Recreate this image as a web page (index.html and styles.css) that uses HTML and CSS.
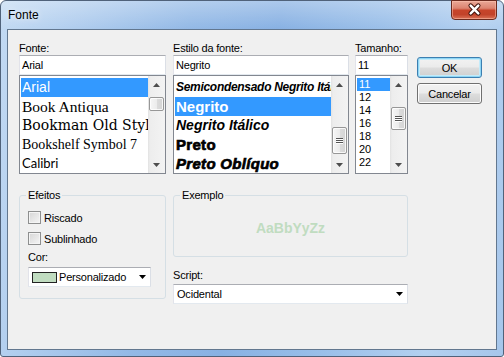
FILE: index.html
```html
<!DOCTYPE html>
<html lang="pt-BR">
<head>
    <meta charset="UTF-8">
    <title>Fonte</title>
    <link rel="stylesheet" href="styles.css">
</head>
<body>
    <div class="window">
        <div class="titlebar">
            <span class="title">Fonte</span>
            <button class="close-btn" aria-label="Fechar">
                <svg width="46" height="19" viewBox="0 0 46 19">
                    <path d="M19.5 5.5 L27.5 13.5 M27.5 5.5 L19.5 13.5" stroke="#3e1109" stroke-width="4.6" stroke-linecap="round" fill="none"/>
                    <path d="M19.5 5.5 L27.5 13.5 M27.5 5.5 L19.5 13.5" stroke="#fff" stroke-width="2.6" stroke-linecap="round" fill="none"/>
                </svg>
            </button>
        </div>
        <div class="frame">
            <div class="client">
                <div class="top-grid">
                    <!-- Fonte -->
                    <div class="col">
                        <label class="label">Fonte:</label>
                        <div class="textbox w-font">Arial</div>
                        <div class="listbox w-font">
                            <ul class="items">
                                <li class="selected f-arial">Arial</li>
                                <li class="f-book">Book Antiqua</li>
                                <li class="f-bookman">Bookman Old Style</li>
                                <li class="f-bookshelf">Bookshelf Symbol 7</li>
                                <li class="f-calibri">Calibri</li>
                            </ul>
                            <div class="scrollbar">
                                <span class="sb-btn"><svg width="7" height="4"><polygon points="0,4 7,4 3.5,0" fill="#4d4d4d"/></svg></span>
                                <div class="sb-track"><span class="thumb thumb-font"></span></div>
                                <span class="sb-btn"><svg width="7" height="4"><polygon points="0,0 7,0 3.5,4" fill="#4d4d4d"/></svg></span>
                            </div>
                        </div>
                    </div>

                    <!-- Estilo da fonte -->
                    <div class="col">
                        <label class="label">Estilo da fonte:</label>
                        <div class="textbox w-style">Negrito</div>
                        <div class="listbox w-style">
                            <ul class="items">
                                <li class="s-semi">Semicondensado Negrito Itálico</li>
                                <li class="selected s-negrito">Negrito</li>
                                <li class="s-negrito-it">Negrito Itálico</li>
                                <li class="s-preto">Preto</li>
                                <li class="s-preto-obl">Preto Oblíquo</li>
                            </ul>
                            <div class="scrollbar">
                                <span class="sb-btn"><svg width="7" height="4"><polygon points="0,4 7,4 3.5,0" fill="#4d4d4d"/></svg></span>
                                <div class="sb-track"><span class="thumb thumb-style grip"></span></div>
                                <span class="sb-btn"><svg width="7" height="4"><polygon points="0,0 7,0 3.5,4" fill="#4d4d4d"/></svg></span>
                            </div>
                        </div>
                    </div>

                    <!-- Tamanho -->
                    <div class="col">
                        <label class="label">Tamanho:</label>
                        <div class="textbox w-size">11</div>
                        <div class="listbox w-size">
                            <ul class="items sizes">
                                <li class="selected">11</li>
                                <li>12</li>
                                <li>14</li>
                                <li>16</li>
                                <li>18</li>
                                <li>20</li>
                                <li>22</li>
                            </ul>
                            <div class="scrollbar">
                                <span class="sb-btn"><svg width="7" height="4"><polygon points="0,4 7,4 3.5,0" fill="#4d4d4d"/></svg></span>
                                <div class="sb-track"><span class="thumb thumb-size grip"></span></div>
                                <span class="sb-btn"><svg width="7" height="4"><polygon points="0,0 7,0 3.5,4" fill="#4d4d4d"/></svg></span>
                            </div>
                        </div>
                    </div>

                    <!-- botões -->
                    <div class="col buttons">
                        <button class="btn btn-default">OK</button>
                        <button class="btn">Cancelar</button>
                    </div>
                </div>

                <div class="bottom-grid">
                    <fieldset class="group effects">
                        <legend>Efeitos</legend>
                        <div class="check"><span class="checkbox"></span>Riscado</div>
                        <div class="check second"><span class="checkbox"></span>Sublinhado</div>
                        <label class="label cor-label">Cor:</label>
                        <div class="combo color-combo">
                            <span class="swatch"></span>
                            <span class="combo-text">Personalizado</span>
                            <svg width="7" height="4"><polygon points="0,0 7,0 3.5,4" fill="#000"/></svg>
                        </div>
                    </fieldset>

                    <div class="col">
                        <fieldset class="group sample">
                            <legend>Exemplo</legend>
                            <div class="sample-text">AaBbYyZz</div>
                        </fieldset>
                        <label class="label script-label">Script:</label>
                        <div class="combo script-combo">
                            <span class="combo-text">Ocidental</span>
                            <svg width="7" height="4"><polygon points="0,0 7,0 3.5,4" fill="#000"/></svg>
                        </div>
                    </div>
                </div>
            </div>
        </div>
    </div>
</body>
</html>
```

FILE: styles.css
```css
* {
    box-sizing: border-box;
    margin: 0;
    padding: 0;
}

body {
    background-color: #fff;
    font-family: 'Liberation Sans', Arial, sans-serif;
    font-size: 11px;
    letter-spacing: -0.2px;
    color: #000;
}

/* janela estilo Aero */
.window {
    width: 504px;
    height: 357px;
    display: flex;
    flex-direction: column;
    border: 1px solid #50627a;
    border-radius: 6px 6px 3px 3px;
    background:
        linear-gradient(to bottom, rgba(255,255,255,0.3), rgba(255,255,255,0) 28px),
        linear-gradient(100deg, #c3daf3 0%, #b0cdee 14%, #93b9e6 34%, #88b1e3 50%, #9abfe9 68%, #b3d0f0 86%, #a6c6eb 100%);
}

.titlebar {
    height: 28px;
    display: flex;
    justify-content: space-between;
    align-items: flex-start;
    padding: 0 6px 0 7px;
}

.title {
    margin-top: 7px;
    font-size: 12px;
    line-height: 14px;
    letter-spacing: 0;
    text-shadow: 0 0 6px rgba(255,255,255,0.9);
}

.close-btn {
    width: 46px;
    height: 20px;
    margin-top: -1px;
    border: 1px solid #6a2a1e;
    border-radius: 0 0 4px 4px;
    background: linear-gradient(to bottom, #eaa897 0%, #dc8470 40%, #c7442a 52%, #c2432a 75%, #da7257 100%);
    box-shadow: inset 0 0 0 1px rgba(255,200,180,0.5);
    display: flex;
    align-items: center;
    justify-content: center;
}

.close-btn svg {
    display: block;
    margin-top: -1px;
}

.frame {
    flex: 1;
    display: flex;
    padding: 0 6px 6px;
}

.client {
    flex: 1;
    border: 1px solid #62778f;
    background-color: #f0f0f0;
    padding: 12px 0 0 11px;
}

/* parte de cima */
.top-grid {
    display: grid;
    grid-template-columns: 154px 182px 62px 65px;
}

.col {
    display: flex;
    flex-direction: column;
}

.label {
    display: block;
    height: 13px;
    line-height: 13px;
}

.w-font { width: 147px; }
.w-style { width: 176px; }
.w-size { width: 53px; }

.textbox {
    height: 20px;
    line-height: 18px;
    padding: 0 2px;
    background-color: #fff;
    border: 1px solid;
    border-color: #abadb3 #dbdfe6 #e3e9ef #e2e3ea;
}

.listbox {
    height: 99px;
    display: flex;
    background-color: #fff;
    border: 1px solid #828790;
    overflow: hidden;
}

.items {
    flex: 1;
    list-style: none;
    padding: 2px 0 0 1px;
    overflow: hidden;
    letter-spacing: 0;
}

.items li {
    height: 19px;
    line-height: 19px;
    padding-left: 1px;
    white-space: nowrap;
    overflow: hidden;
}

.items li.selected {
    background-color: #3399ff;
    color: #fff;
}

.f-arial { font-size: 14px; }
.f-book { font-family: 'Liberation Serif', serif; font-size: 15.5px; }
.f-bookman { font-family: 'DejaVu Serif', serif; font-size: 14px; }
.f-bookshelf { font-family: 'Liberation Serif', serif; font-size: 14px; }
.f-calibri { font-family: Lato, sans-serif; font-size: 13px; }

.s-semi {
    font-size: 12px;
    font-weight: bold;
    font-style: italic;
    letter-spacing: -0.3px;
}

.s-negrito {
    font-size: 15px;
    font-weight: bold;
}

.s-negrito-it {
    font-size: 14px;
    font-weight: bold;
    font-style: italic;
}

.s-preto,
.s-preto-obl {
    font-size: 15px;
    font-weight: bold;
    -webkit-text-stroke: 0.7px #000;
    letter-spacing: 0.3px;
}

.s-preto-obl {
    font-style: italic;
}

.items.sizes li {
    height: 13px;
    line-height: 13px;
    font-size: 11px;
    padding-left: 2px;
    width: 34px;
}

/* barra de rolagem */
.scrollbar {
    width: 17px;
    display: flex;
    flex-direction: column;
    background: linear-gradient(to right, #e2e2e2 0, #ededed 2px, #f3f3f3 100%);
}

.sb-btn {
    height: 17px;
    display: flex;
    align-items: center;
    justify-content: center;
}

.sb-btn svg {
    display: block;
}

.sb-track {
    flex: 1;
    padding: 0 1px;
}

.thumb {
    display: flex;
    align-items: center;
    justify-content: center;
    width: 15px;
    border: 1px solid #979797;
    border-radius: 2px;
    background: linear-gradient(to right, #f6f6f6 0%, #ececec 50%, #dcdcdc 51%, #d4d4d4 100%);
    box-shadow: inset 0 0 0 1px rgba(255,255,255,0.8);
}

.thumb-font { margin-top: 4px; height: 14px; }
.thumb-style { margin-top: 34px; height: 27px; }
.thumb-size { margin-top: 14px; height: 23px; }

.grip::after {
    content: "";
    width: 7px;
    height: 6px;
    background: repeating-linear-gradient(to bottom, #555 0, #555 1px, #fff 1px, #fff 2px);
}

/* botões */
.buttons {
    padding-top: 15px;
}

.btn {
    width: 65px;
    height: 21px;
    font-family: inherit;
    font-size: 11px;
    letter-spacing: -0.2px;
    color: #000;
    border: 1px solid #707070;
    border-radius: 3px;
    background: linear-gradient(to bottom, #f2f2f2 0%, #ebebeb 48%, #dddddd 52%, #cfcfcf 100%);
    box-shadow: inset 0 0 0 1px #fcfcfc;
}

.btn + .btn {
    margin-top: 5px;
}

.btn-default {
    border-color: #3c7fb1;
    box-shadow: inset 0 0 0 1px #8fd6f5, inset 0 0 0 2px #c4ebfa;
}

/* parte de baixo */
.bottom-grid {
    display: grid;
    grid-template-columns: 154px 235px;
    align-items: start;
    margin-top: 15px;
}

.group {
    border: 1px solid #d5dfe5;
    border-radius: 3px;
    padding: 0 8px;
}

.group legend {
    padding: 0 2px;
    margin-left: -2px;
    line-height: 13px;
}

.effects {
    width: 147px;
    padding-top: 9px;
    padding-bottom: 11px;
}

.check {
    display: flex;
    align-items: center;
    gap: 3px;
    height: 13px;
}

.check.second {
    margin-top: 8px;
}

.checkbox {
    width: 13px;
    height: 13px;
    border: 1px solid #8e8f8f;
    background: linear-gradient(135deg, #d6d6d6 0%, #f5f5f5 100%);
    box-shadow: inset 0 0 0 1px #f4f4f4;
}

.cor-label {
    margin-top: 6px;
}

.combo {
    height: 20px;
    display: flex;
    align-items: center;
    background-color: #fff;
    border: 1px solid;
    border-color: #abadb3 #dbdfe6 #e3e9ef #e2e3ea;
}

.combo svg {
    display: block;
    margin-left: auto;
}

.color-combo {
    width: 123px;
    margin-top: 3px;
    padding: 0 4px 0 3px;
}

.swatch {
    width: 25px;
    height: 11px;
    border: 1px solid #222;
    background-color: #c0dcc0;
    margin-right: 2px;
}

.sample {
    width: 235px;
    padding-top: 18px;
    padding-bottom: 20px;
}

.sample-text {
    text-align: center;
    font-size: 14px;
    line-height: 16px;
    font-weight: bold;
    letter-spacing: 0;
    color: #c0dcc0;
}

.script-label {
    margin-top: 12px;
}

.script-combo {
    width: 235px;
    margin-top: 2px;
    padding: 0 4px 0 3px;
}
```
